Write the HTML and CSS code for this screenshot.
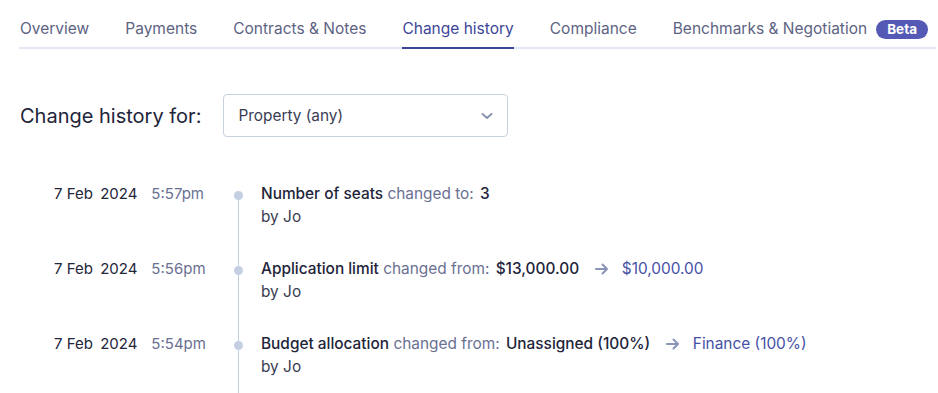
FILE: index.html
```html
<!DOCTYPE html>
<html lang="en">
<head>
    <meta charset="UTF-8">
    <meta name="viewport" content="width=device-width, initial-scale=1.0">
    <title>Change history</title>
    <link rel="stylesheet" href="styles.css">
</head>
<body>
    <div class="page">
        <nav class="tabs">
            <a class="tab" href="#">Overview</a>
            <a class="tab" href="#">Payments</a>
            <a class="tab" href="#">Contracts &amp; Notes</a>
            <a class="tab active" href="#">Change history</a>
            <a class="tab" href="#">Compliance</a>
            <a class="tab" href="#">Benchmarks &amp; Negotiation <span class="badge">Beta</span></a>
        </nav>

        <div class="filter">
            <label class="filter-label" for="property">Change history for:</label>
            <div class="select">
                <span>Property (any)</span>
                <svg class="chevron" width="14" height="14" viewBox="0 0 14 14"><path d="M2.5 5l4.5 4 4.5-4" fill="none" stroke="#8b94b3" stroke-width="2" stroke-linecap="round" stroke-linejoin="round"/></svg>
            </div>
        </div>

        <div class="timeline">
            <div class="entry first">
                <div class="when"><span class="date">7 Feb <span class="year">2024</span></span><span class="time">5:57pm</span></div>
                <div class="marker"><span class="dot"></span></div>
                <div class="what">
                    <div><span class="field">Number of seats</span> <span class="muted">changed to:</span> <span class="value">3</span></div>
                    <div class="by">by Jo</div>
                </div>
            </div>
            <div class="entry">
                <div class="when"><span class="date">7 Feb <span class="year">2024</span></span><span class="time">5:56pm</span></div>
                <div class="marker"><span class="dot"></span></div>
                <div class="what">
                    <div><span class="field">Application limit</span> <span class="muted">changed from:</span> <span class="value">$13,000.00</span>
                        <svg class="arrow" width="14" height="12" viewBox="0 0 14 12"><path d="M1 6h11M7.5 1.5L12 6l-4.5 4.5" fill="none" stroke="#8a93b8" stroke-width="2" stroke-linecap="round" stroke-linejoin="round"/></svg>
                        <span class="new">$10,000.00</span></div>
                    <div class="by">by Jo</div>
                </div>
            </div>
            <div class="entry">
                <div class="when"><span class="date">7 Feb <span class="year">2024</span></span><span class="time">5:54pm</span></div>
                <div class="marker"><span class="dot"></span></div>
                <div class="what">
                    <div><span class="field">Budget allocation</span> <span class="muted">changed from:</span> <span class="value">Unassigned (100%)</span>
                        <svg class="arrow" width="14" height="12" viewBox="0 0 14 12"><path d="M1 6h11M7.5 1.5L12 6l-4.5 4.5" fill="none" stroke="#8a93b8" stroke-width="2" stroke-linecap="round" stroke-linejoin="round"/></svg>
                        <span class="new">Finance (100%)</span></div>
                    <div class="by">by Jo</div>
                </div>
            </div>
        </div>
    </div>
</body>
</html>
```

FILE: styles.css
```css
body {
    margin: 0;
    background: #fff;
    font-family: Inter, 'Liberation Sans', sans-serif;
    color: #22243a;
    font-size: 15px;
}
.page {
    padding: 0 2px 0 19px;
}
.tabs {
    display: flex;
    gap: 36px;
    padding: 19px 0 0 1px;
    border-bottom: 2px solid #e4e8f2;
}
.tab {
    display: flex;
    align-items: center;
    line-height: 20px;
    padding-bottom: 8px;
    margin-bottom: -2px;
    border-bottom: 2px solid transparent;
    color: #5d6383;
    font-size: 15.5px;
    text-decoration: none;
}
.tab.active {
    color: #3c4699;
    border-bottom-color: #3c4699;
}
.badge {
    margin-left: 9px;
    background: #5359b5;
    color: #fff;
    font-size: 13.5px;
    font-weight: 700;
    line-height: 19px;
    padding: 0 11px;
    border-radius: 10px;
}
.filter {
    display: flex;
    align-items: center;
    gap: 22px;
    margin-top: 45px;
    padding-left: 1px;
}
.filter-label {
    font-size: 20px;
    color: #22243a;
}
.select {
    height: 41px;
    width: 256px;
    border: 1px solid #c9d1e1;
    border-radius: 4px;
    display: flex;
    align-items: center;
    justify-content: space-between;
    padding: 0 13px 0 14px;
    color: #3a3d55;
    font-size: 15.4px;
}
.chevron {
    margin-top: 1px;
}
.timeline {
    margin-top: 45px;
    padding-left: 35px;
}
.entry {
    display: flex;
    line-height: 23px;
}
.when {
    width: 174px;
    display: flex;
    gap: 14px;
}
.date {
    color: #23253a;
}
.year {
    margin-left: 3px;
}
.time {
    color: #6a7092;
}
.marker {
    position: relative;
    width: 22px;
}
.marker::before {
    content: "";
    position: absolute;
    left: 10px;
    top: 0;
    bottom: 0;
    width: 1px;
    background: #c2cde0;
}
.entry.first .marker::before {
    top: 13px;
}
.dot {
    position: absolute;
    left: 6px;
    top: 9px;
    width: 9px;
    height: 9px;
    border-radius: 50%;
    background: #c5cfe2;
}
.what {
    padding-left: 11px;
    padding-bottom: 29px;
    font-size: 15.4px;
}
.field {
    font-weight: 500;
    color: #22243a;
}
.muted {
    color: #6a7092;
    margin-right: 2px;
}
.value {
    font-weight: 500;
    color: #22243a;
}
.arrow {
    margin: 0 8px 0 12px;
    vertical-align: -1px;
}
.new {
    color: #4650a6;
}
.by {
    color: #3a3d52;
}
```
